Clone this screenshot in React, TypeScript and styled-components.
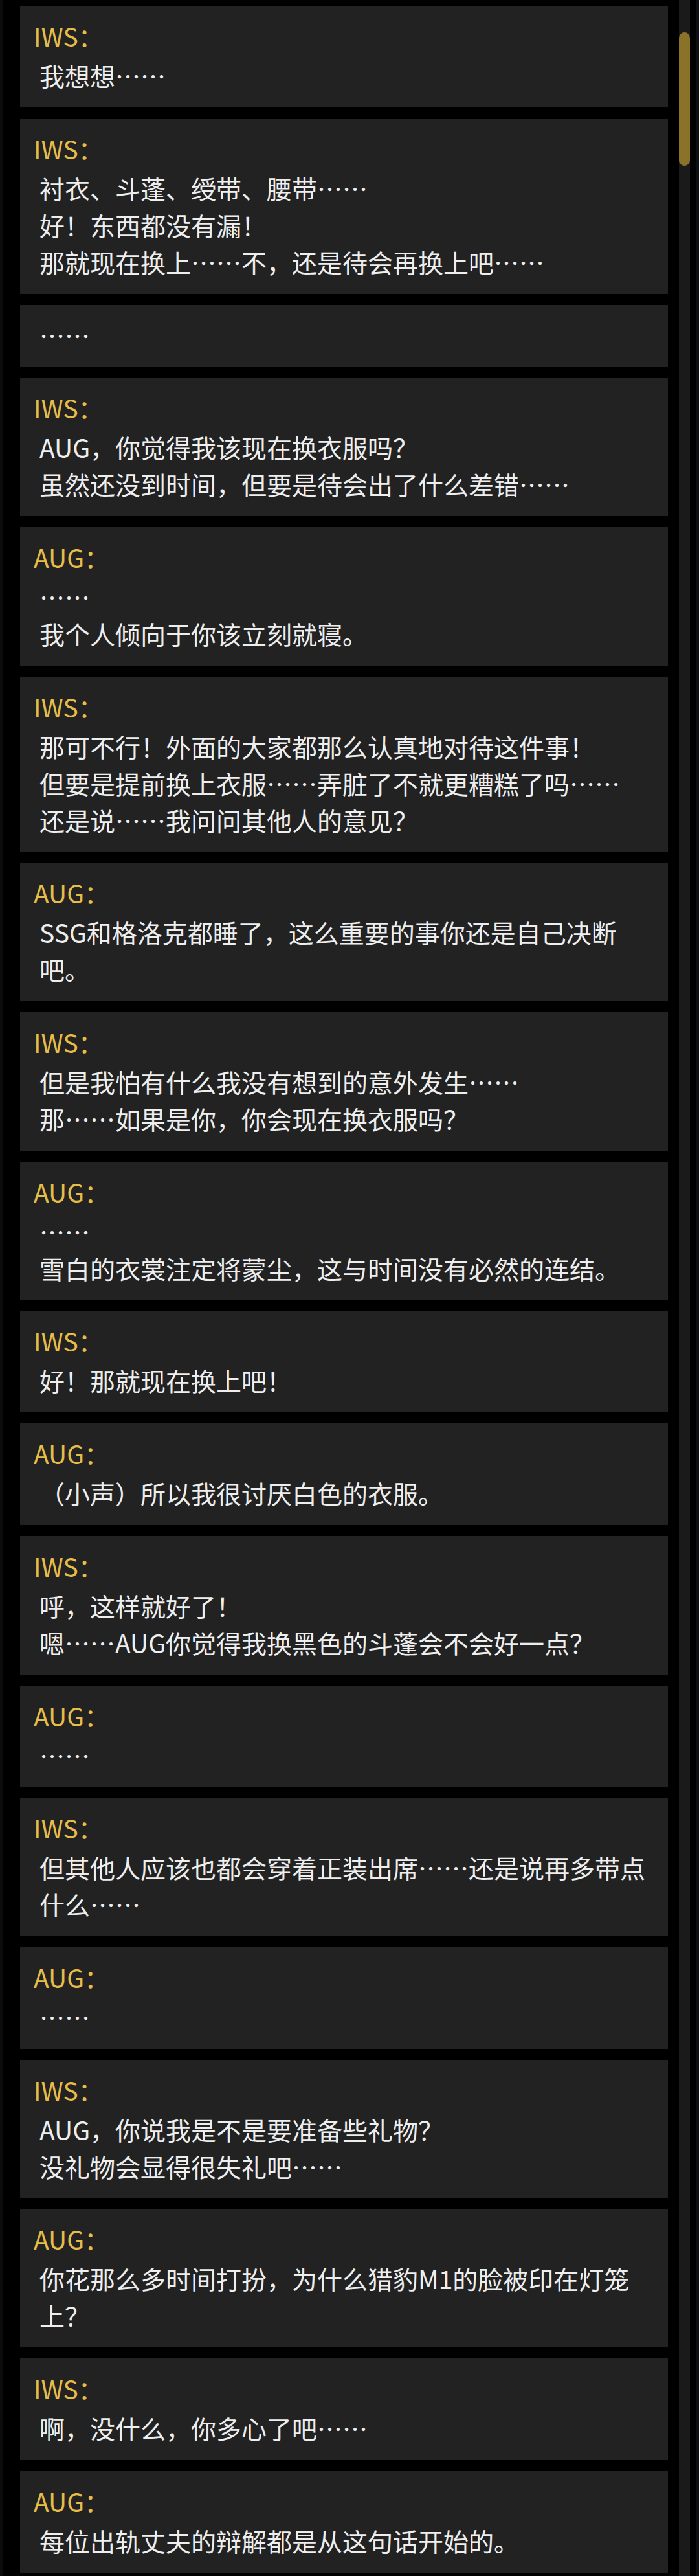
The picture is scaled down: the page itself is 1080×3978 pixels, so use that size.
import React from "react";
import styled, { createGlobalStyle } from "styled-components";

const GlobalStyle = createGlobalStyle`
  html, body {
    margin: 0;
    padding: 0;
    background: #000000;
  }
  * { box-sizing: border-box; }
`;

type Line = { speaker?: string; lines: string[] };

const dialogue: Line[] = [
  { speaker: "IWS", lines: ["我想想……"] },
  {
    speaker: "IWS",
    lines: ["衬衣、斗蓬、绶带、腰带……", "好！东西都没有漏！", "那就现在换上……不，还是待会再换上吧……"],
  },
  { lines: ["……"] },
  {
    speaker: "IWS",
    lines: ["AUG，你觉得我该现在换衣服吗？", "虽然还没到时间，但要是待会出了什么差错……"],
  },
  { speaker: "AUG", lines: ["……", "我个人倾向于你该立刻就寝。"] },
  {
    speaker: "IWS",
    lines: [
      "那可不行！外面的大家都那么认真地对待这件事！",
      "但要是提前换上衣服……弄脏了不就更糟糕了吗……",
      "还是说……我问问其他人的意见？",
    ],
  },
  { speaker: "AUG", lines: ["SSG和格洛克都睡了，这么重要的事你还是自己决断吧。"] },
  {
    speaker: "IWS",
    lines: ["但是我怕有什么我没有想到的意外发生……", "那……如果是你，你会现在换衣服吗？"],
  },
  { speaker: "AUG", lines: ["……", "雪白的衣裳注定将蒙尘，这与时间没有必然的连结。"] },
  { speaker: "IWS", lines: ["好！那就现在换上吧！"] },
  { speaker: "AUG", lines: ["（小声）所以我很讨厌白色的衣服。"] },
  {
    speaker: "IWS",
    lines: ["呼，这样就好了！", "嗯……AUG你觉得我换黑色的斗蓬会不会好一点？"],
  },
  { speaker: "AUG", lines: ["……"] },
  { speaker: "IWS", lines: ["但其他人应该也都会穿着正装出席……还是说再多带点什么……"] },
  { speaker: "AUG", lines: ["……"] },
  {
    speaker: "IWS",
    lines: ["AUG，你说我是不是要准备些礼物？", "没礼物会显得很失礼吧……"],
  },
  { speaker: "AUG", lines: ["你花那么多时间打扮，为什么猎豹M1的脸被印在灯笼上？"] },
  { speaker: "IWS", lines: ["啊，没什么，你多心了吧……"] },
  { speaker: "AUG", lines: ["每位出轨丈夫的辩解都是从这句话开始的。"] },
];

const Screen = styled.div`
  display: flex;
  min-height: 100vh;
  background: #000000;
  border-left: 5px solid #0c0c0c;
  border-right: 5px solid #0e0f12;
  font-family: "Noto Sans CJK SC", "Noto Sans", sans-serif;
`;

const Feed = styled.div`
  flex: 1;
  display: flex;
  flex-direction: column;
  gap: 16.7px;
  padding: 9.3px 0 6px 26px;
`;

const Card = styled.div`
  background: #222222;
  padding: 18px 34px 21px 21px;
`;

const Speaker = styled.div`
  color: #e6bd48;
  font-size: 39px;
  line-height: 57px;
  margin-bottom: 4px;
`;

const Body = styled.div`
  color: #eeeeee;
  font-size: 39px;
  line-height: 57px;
  margin-left: 9px;
`;

const Track = styled.div`
  width: 17px;
  margin-left: 17px;
  margin-right: 9px;
  background: #1a1a1a;
  display: flex;
  flex-direction: column;
`;

const Thumb = styled.div`
  margin-top: 50px;
  height: 206px;
  border-radius: 9px;
  background: #8b7229;
`;

export default function App() {
  return (
    <>
      <GlobalStyle />
      <Screen>
        <Feed>
          {dialogue.map((d, i) => (
            <Card key={i}>
              {d.speaker && <Speaker>{d.speaker}：</Speaker>}
              {d.lines.map((l, j) => (
                <Body key={j}>{l}</Body>
              ))}
            </Card>
          ))}
        </Feed>
        <Track>
          <Thumb />
        </Track>
      </Screen>
    </>
  );
}
